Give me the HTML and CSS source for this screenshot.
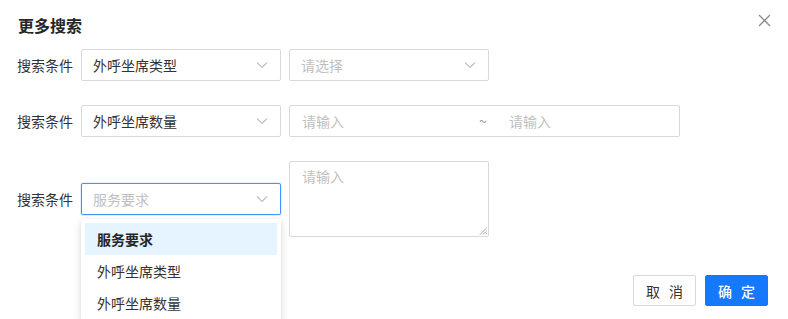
FILE: index.html
```html
<!DOCTYPE html>
<html lang="zh-CN">
<head>
  <meta charset="UTF-8" />
  <meta name="viewport" content="width=device-width, initial-scale=1" />
  <title>更多搜索</title>
  <link rel="stylesheet" href="styles.css">
</head>
<body>
  <div class="dialog">
    <header class="dialog-header">
      <h2>更多搜索</h2>
      <span class="cerrar">
        <svg width="13" height="13" viewBox="0 0 13 13"><path d="M1 1 L12 12 M12 1 L1 12" stroke="#8c8c8c" stroke-width="1.3" fill="none"/></svg>
      </span>
    </header>

    <main class="dialog-body">
      <div class="fila">
        <span class="etiqueta">搜索条件</span>
        <div class="select">
          <span class="valor">外呼坐席类型</span>
          <svg class="flecha" width="12" height="8" viewBox="0 0 12 8"><path d="M1 1.5 L6 6.5 L11 1.5" stroke="#bfbfbf" stroke-width="1.1" fill="none"/></svg>
        </div>
        <div class="select">
          <span class="placeholder">请选择</span>
          <svg class="flecha" width="12" height="8" viewBox="0 0 12 8"><path d="M1 1.5 L6 6.5 L11 1.5" stroke="#bfbfbf" stroke-width="1.1" fill="none"/></svg>
        </div>
      </div>

      <div class="fila">
        <span class="etiqueta">搜索条件</span>
        <div class="select">
          <span class="valor">外呼坐席数量</span>
          <svg class="flecha" width="12" height="8" viewBox="0 0 12 8"><path d="M1 1.5 L6 6.5 L11 1.5" stroke="#bfbfbf" stroke-width="1.1" fill="none"/></svg>
        </div>
        <div class="rango">
          <span class="placeholder mitad">请输入</span>
          <span class="tilde">~</span>
          <span class="placeholder mitad">请输入</span>
        </div>
      </div>

      <div class="fila">
        <span class="etiqueta">搜索条件</span>
        <div class="select-wrap">
          <div class="select activo">
            <span class="placeholder">服务要求</span>
            <svg class="flecha" width="12" height="8" viewBox="0 0 12 8"><path d="M1 1.5 L6 6.5 L11 1.5" stroke="#bfbfbf" stroke-width="1.1" fill="none"/></svg>
          </div>
          <ul class="menu">
            <li class="elegido">服务要求</li>
            <li>外呼坐席类型</li>
            <li>外呼坐席数量</li>
          </ul>
        </div>
        <div class="area">
          <span class="placeholder">请输入</span>
          <svg class="resize" width="8" height="8" viewBox="0 0 8 8"><path d="M7.5 1 L1 7.5 M7.5 4 L4 7.5 M7.5 6.5 L6.5 7.5" stroke="#555" stroke-width="0.8" fill="none" stroke-dasharray="1 0.6"/></svg>
        </div>
      </div>
    </main>

    <footer class="dialog-footer">
      <button class="btn">取 消</button>
      <button class="btn btn-primario">确 定</button>
    </footer>
  </div>
</body>
</html>
```

FILE: styles.css
```css
html, body { margin: 0; padding: 0; background: #fff; overflow: hidden; }
body { font-family: "Noto Sans CJK SC", "Noto Sans", sans-serif; color: #333; font-size: 14px; }
.dialog { width: 788px; height: 319px; box-sizing: border-box; }
.dialog-header { height: 49px; display: flex; justify-content: space-between; align-items: center; padding: 0 18px 0 18px; box-sizing: border-box; }
.dialog-header h2 { margin: 0; font-size: 16px; font-weight: bold; color: #262626; line-height: 1; }
.cerrar { display: flex; margin-bottom: 8px; margin-right: -1px; }
.dialog-body { padding-left: 17px; }
.fila { display: flex; align-items: center; gap: 8px; margin-bottom: 24px; }
.etiqueta { width: 56px; line-height: 20px; white-space: nowrap; }
.select { width: 200px; height: 32px; box-sizing: border-box; border: 1px solid #d9d9d9; border-radius: 2px; display: flex; align-items: center; justify-content: space-between; padding: 0 12px 0 11px; background: #fff; }
.select.activo { border-color: #4096ff; box-shadow: 0 0 0 1px rgba(64,150,255,0.15); }
.valor { color: #333; }
.placeholder { color: #bfbfbf; }
.flecha { display: block; }
.rango { width: 391px; height: 32px; box-sizing: border-box; border: 1px solid #d9d9d9; border-radius: 2px; display: flex; align-items: center; padding: 0 12px; }
.mitad { flex: 1; }
.tilde { color: #999; width: 30px; margin-left: 19px; }
.select-wrap { position: relative; }
.menu { position: absolute; top: 36px; left: 0; width: 200px; box-sizing: border-box; margin: 0; padding: 4px; list-style: none; background: #fff; box-shadow: 0 3px 10px rgba(0,0,0,0.12), 0 1px 4px rgba(0,0,0,0.06); border-radius: 2px; z-index: 10; }
.menu li { height: 32px; line-height: 32px; padding: 0 12px; color: #333; }
.menu li.elegido { background: #e6f4ff; font-weight: bold; color: #262626; }
.area { position: relative; width: 200px; height: 76px; box-sizing: border-box; border: 1px solid #d9d9d9; border-radius: 2px; padding: 3px 12px; line-height: 22px; }
.resize { position: absolute; right: 1px; bottom: 1px; }
.dialog-footer { display: flex; justify-content: flex-end; gap: 9px; padding-right: 20px; padding-top: 14px; }
.btn { width: 63px; height: 31px; box-sizing: border-box; border: 1px solid #d9d9d9; border-radius: 2px; background: #fff; color: #333; font-family: inherit; font-size: 14px; padding: 0; letter-spacing: 3px; text-indent: 3px; }
.btn-primario { background: #1677ff; border-color: #1677ff; color: #fff; font-weight: 500; }
```
